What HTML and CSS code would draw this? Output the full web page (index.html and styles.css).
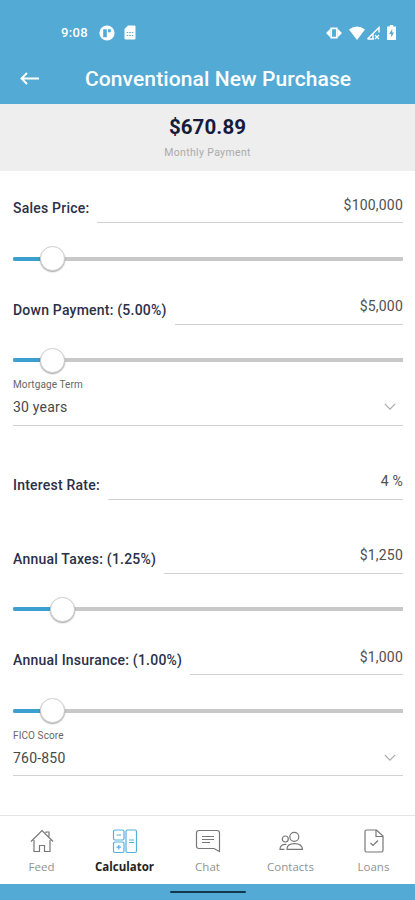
FILE: index.html
```
<!DOCTYPE html>
<html lang="en">
<head>
    <meta charset="UTF-8">
    <meta name="viewport" content="width=device-width, initial-scale=1.0">
    <title>Conventional New Purchase</title>
    <link rel="stylesheet" href="styles.css">
</head>
<body>
    <div class="app">
        <header class="header">
            <div class="status-bar">
                <span class="time">9:08</span>
                <svg class="app-badge" width="16" height="16" viewBox="0 0 16 16"><circle cx="8" cy="8" r="7.6" fill="#fff"/><path d="M4.2 4.200h3.600v8H4.200zM9 4.200h2.800v3H9z" fill="#52aad5"/></svg>
                <svg class="sim" width="12" height="15" viewBox="0 0 12 15"><path d="M4 .5h6.5q1 0 1 1v12q0 1-1 1h-9q-1 0-1-1V4z" fill="#fff"/><path d="M2.800 7.500h1.400m1 0h1.600m1 0h1.400M2.800 10.500h1.400m1 0h1.600m1 0h1.400" stroke="#52aad5"/></svg>
                <svg class="vibrate" width="16" height="14" viewBox="0 0 16 14"><path d="M5.200 2.300h5.600v9.400H5.200z" fill="none" stroke="#fff" stroke-width="1.700"/><path d="M4.500 2.500 0 7l4.500 4.500zM11.500 2.500 16 7l-4.500 4.500z" fill="#fff"/></svg>
                <svg class="wifi" width="16" height="14" viewBox="0 0 16 14"><path d="M0 3.500Q8-2.500 16 3.500L8 14z" fill="#fff"/></svg>
                <svg class="signal" width="14" height="14" viewBox="0 0 14 14"><path d="M1.500 13 13 1.500v5M1.500 13H8M7 7.500V13" fill="none" stroke="#fff" stroke-width="1.400"/><path d="m9 9 4 4m0-4-4 4" stroke="#fff" stroke-width="1.200"/></svg>
                <svg class="battery" width="9" height="15" viewBox="0 0 9 15"><path d="M2.800 0h3.400v1.600H9V15H0V1.600h2.800z" fill="#fff"/><path d="M5.200 4 2.200 9h2v3.500l2.800-5H5.200z" fill="#52aad5"/></svg>
            </div>
            <div class="title-bar">
                <svg class="back" width="20" height="14" viewBox="0 0 20 14"><path d="M19 6.500H1.500M7 1 1.500 6.500l5.500 5.500" fill="none" stroke="#fff" stroke-width="1.900"/></svg>
                <h1>Conventional New Purchase</h1>
            </div>
        </header>

        <section class="summary">
            <div class="amount">$670.89</div>
            <div class="caption">Monthly Payment</div>
        </section>

        <main class="form">
            <div class="field">
                <span class="label">Sales Price:</span>
                <span class="value">$100,000</span>
            </div>
            <div class="slider"><div class="fill" style="width: 39.5px"><span class="thumb"></span></div></div>

            <div class="field">
                <span class="label">Down Payment: (5.00%)</span>
                <span class="value">$5,000</span>
            </div>
            <div class="slider"><div class="fill" style="width: 39.5px"><span class="thumb"></span></div></div>

            <div class="select">
                <span class="select-label">Mortgage Term</span>
                <div class="select-value">
                    <span>30 years</span>
                    <svg width="12" height="8" viewBox="0 0 12 8"><path d="m.8.8 5.200 5.400L11.200.8" fill="none" stroke="#aaa" stroke-width="1.200"/></svg>
                </div>
            </div>

            <div class="field spaced">
                <span class="label">Interest Rate:</span>
                <span class="value">4 %</span>
            </div>

            <div class="field spaced">
                <span class="label">Annual Taxes: (1.25%)</span>
                <span class="value">$1,250</span>
            </div>
            <div class="slider"><div class="fill" style="width: 49px"><span class="thumb"></span></div></div>

            <div class="field">
                <span class="label">Annual Insurance: (1.00%)</span>
                <span class="value">$1,000</span>
            </div>
            <div class="slider"><div class="fill" style="width: 39.5px"><span class="thumb"></span></div></div>

            <div class="select">
                <span class="select-label">FICO Score</span>
                <div class="select-value">
                    <span>760-850</span>
                    <svg width="12" height="8" viewBox="0 0 12 8"><path d="m.8.8 5.200 5.400L11.200.8" fill="none" stroke="#aaa" stroke-width="1.200"/></svg>
                </div>
            </div>
        </main>

        <nav class="tabs">
            <div class="tab">
                <svg width="26" height="26" viewBox="0 0 26 26"><path d="M2 13.500 13 2.500l11 11M5 12v11.500h5.500v-6h5v6H21V12M17 5V4h3v4.500"/></svg>
                <span>Feed</span>
            </div>
            <div class="tab active">
                <svg width="26" height="26" viewBox="0 0 26 26"><rect x="1.500" y="2" width="10.500" height="10" rx="1.500"/><rect x="1.500" y="14" width="10.500" height="10.500" rx="1.500"/><rect x="14" y="2" width="10.500" height="22.500" rx="1.500"/><path d="M4.500 7H9M4.500 19.200H9M6.800 17v4.500M17 12h5M17 14.500h5"/></svg>
                <span>Calculator</span>
            </div>
            <div class="tab">
                <svg width="26" height="26" viewBox="0 0 26 26"><path d="M4 2.500h18q2.500 0 2.500 2.500v18.500L19 20.500H4Q1.500 20.500 1.500 18V5Q1.500 2.500 4 2.500zM7 8.500h12M7 11.500h12M7 14.500h8"/></svg>
                <span>Chat</span>
            </div>
            <div class="tab">
                <svg width="26" height="26" viewBox="0 0 26 26"><circle cx="16.300" cy="8.800" r="4.500"/><circle cx="7.300" cy="11" r="3"/><path d="M9 21.300q0-5.600 7.500-5.600t8 5.600zM8.500 16.500Q2 16 2 21.300h4.500"/></svg>
                <span>Contacts</span>
            </div>
            <div class="tab">
                <svg width="26" height="26" viewBox="0 0 26 26"><path d="M5.500 2h10L22 8v14.500q0 1.500-1.500 1.500h-15Q4 24 4 22.500v-19Q4 2 5.500 2zM15 2v6.500h7M9.500 15l2.500 2.500 5-5"/></svg>
                <span>Loans</span>
            </div>
        </nav>
        <div class="home-bar"><span></span></div>
    </div>
</body>
</html>
```
FILE: styles.css
```
:root {
    --blue: #52aad5;
    --navy: #2b3048;
    --line: #d2d2d2;
}
* {
    box-sizing: border-box;
}
body {
    margin: 0;
    font-family: Roboto, "Liberation Sans", sans-serif;
    background: #fff;
}
.app {
    display: flex;
    flex-direction: column;
    height: 900px;
    overflow: hidden;
}
.header {
    height: 103.5px;
    flex: none;
    background: var(--blue);
    color: #fff;
}
.status-bar {
    display: flex;
    align-items: center;
    height: 56px;
    padding: 9px 19px 0 61px;
}
.time {
    width: 38px;
    font-size: 13px;
    font-weight: 500;
    letter-spacing: 0.35px;
}
.sim {
    margin-left: 9px;
}
.vibrate {
    margin-left: auto;
}
.wifi {
    margin-left: 7px;
}
.signal {
    margin-left: 1px;
}
.battery {
    margin-left: 7px;
}
.title-bar {
    display: flex;
    align-items: center;
    height: 46px;
    padding-left: 20px;
}
.title-bar h1 {
    margin: 0 0 0 45px;
    font-size: 21px;
    font-weight: 500;
    letter-spacing: 0.1px;
    line-height: 24px;
    white-space: nowrap;
}
.summary {
    flex: none;
    height: 67px;
    padding-top: 11.5px;
    background: #eee;
    text-align: center;
}
.amount {
    font-size: 20.5px;
    font-weight: 700;
    letter-spacing: 0.1px;
    line-height: 24px;
    color: #161b3b;
}
.caption {
    margin-top: 6px;
    font-size: 10.5px;
    letter-spacing: 0.35px;
    line-height: 16px;
    color: #aaa;
}
.form {
    flex: 1;
    padding: 12.5px 12px 0 13px;
}
.field {
    display: flex;
    gap: 8px;
    height: 40px;
}
.field.spaced {
    margin-top: 34px;
}
.label {
    padding-top: 17px;
    font-size: 14px;
    font-weight: 500;
    letter-spacing: 0.22px;
    line-height: 16px;
    color: var(--navy);
    white-space: nowrap;
}
.value {
    flex: 1;
    padding-top: 13.5px;
    border-bottom: 1.5px solid var(--line);
    font-size: 14px;
    letter-spacing: 0.2px;
    line-height: 16px;
    text-align: right;
    color: #505050;
}
.slider {
    display: flex;
    align-items: center;
    height: 26px;
    margin: 22.5px 0 13px;
    background: linear-gradient(#c8c8c8, #c8c8c8) center / 100% 4px no-repeat;
}
.fill {
    display: flex;
    align-items: center;
    justify-content: flex-end;
    height: 4px;
    border-radius: 2px 0 0 2px;
    background: #3ba0cf;
}
.thumb {
    flex: none;
    width: 25px;
    height: 25px;
    margin-right: -12.5px;
    border: 1px solid #d0d0d0;
    border-radius: 50%;
    background: #fff;
    box-shadow: 0 1px 1.5px rgba(0, 0, 0, 0.35);
}
.select {
    height: 52.5px;
    margin-top: -13px;
    padding-top: 5px;
    border-bottom: 1.5px solid var(--line);
}
.select-label {
    display: block;
    font-size: 10px;
    letter-spacing: 0.1px;
    line-height: 14px;
    color: #666;
}
.select-value {
    display: flex;
    align-items: center;
    justify-content: space-between;
    padding: 6px 7px 0 0;
    font-size: 14px;
    letter-spacing: 0.2px;
    line-height: 18px;
    color: #484848;
}
.tabs {
    display: flex;
    flex: none;
    height: 69px;
    border-top: 1px solid #e4e4e4;
}
.tab {
    display: flex;
    flex: 1;
    flex-direction: column;
    align-items: center;
    padding-top: 12px;
    font-family: "Open Sans", sans-serif;
    font-size: 11.5px;
    line-height: 16px;
    color: #929292;
}
.tab svg {
    margin-bottom: 5px;
    fill: none;
    stroke: #777;
    stroke-width: 1.2;
}
.tab.active {
    font-weight: 700;
    color: #222;
}
.tab.active svg {
    stroke: #55b0dc;
}
.home-bar {
    display: flex;
    align-items: center;
    justify-content: center;
    flex: none;
    height: 16px;
    background: var(--blue);
}
.home-bar span {
    width: 76px;
    height: 2px;
    border-radius: 1px;
    background: #12384c;
}
```
